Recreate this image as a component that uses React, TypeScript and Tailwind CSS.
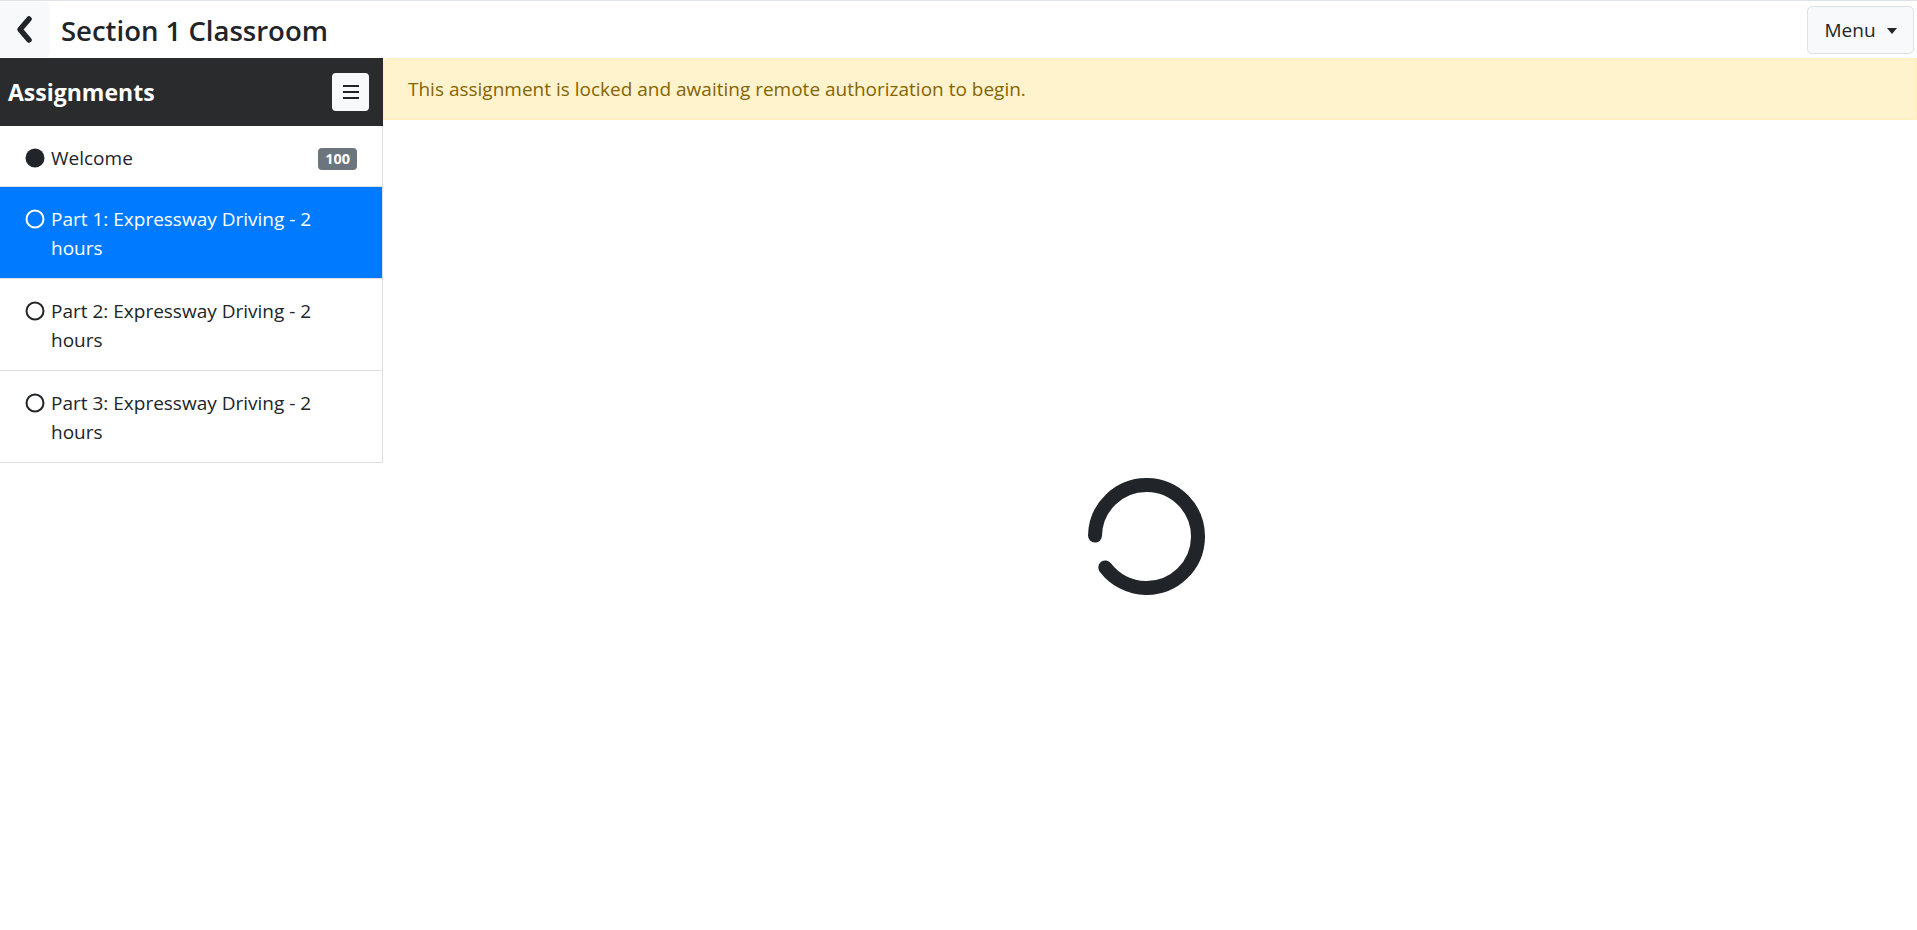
import { useState } from 'react';

const assignments = [
  { id: 'welcome', label: 'Welcome', done: true, score: 100 },
  { id: 'p1', label: 'Part 1: Expressway Driving - 2 hours', done: false },
  { id: 'p2', label: 'Part 2: Expressway Driving - 2 hours', done: false },
  { id: 'p3', label: 'Part 3: Expressway Driving - 2 hours', done: false },
];

function StatusDot({ done, active }: { done: boolean; active: boolean }) {
  const color = active ? '#ffffff' : '#212529';
  return (
    <svg width="20" height="20" viewBox="0 0 20 20" className="shrink-0 mt-[4px]">
      {done ? (
        <circle cx="10" cy="10" r="9.5" fill={color} />
      ) : (
        <circle cx="10" cy="10" r="8.5" fill="none" stroke={color} strokeWidth="2" />
      )}
    </svg>
  );
}

function Spinner() {
  return (
    <svg width="117" height="117" viewBox="0 0 117 117">
      <circle
        cx="58.5"
        cy="58.5"
        r="51.5"
        fill="none"
        stroke="#212529"
        strokeWidth="14"
        strokeLinecap="round"
        strokeDasharray="289 34.6"
        transform="rotate(181 58.5 58.5)"
      />
    </svg>
  );
}

export default function App() {
  const [activeId, setActiveId] = useState('p1');

  return (
    <div className="h-screen flex flex-col bg-white text-[#212529] font-['Open_Sans',sans-serif]">
      <header className="h-[58px] shrink-0 border-t border-[#dee2e6] flex items-center">
        <button
          type="button"
          className="h-[55px] w-[50px] bg-[#f8f9fa] rounded-r-[5px] flex items-center justify-center"
        >
          <svg width="20" height="30" viewBox="0 0 20 30">
            <polyline
              points="14,4 5,14.5 14,25"
              fill="none"
              stroke="#212529"
              strokeWidth="5.5"
              strokeLinecap="round"
              strokeLinejoin="round"
            />
          </svg>
        </button>
        <h1 className="ml-[11px] mt-[3px] text-[27.5px] font-semibold leading-none">Section 1 Classroom</h1>
        <button
          type="button"
          className="ml-auto mr-[3px] h-[48px] w-[107px] pt-[2px] bg-[#f8f9fa] border border-[#dee2e6] rounded-[5px] flex items-center justify-center gap-[11px] text-[19px]"
        >
          Menu
          <span className="w-0 h-0 border-l-[5px] border-r-[5px] border-t-[6px] border-l-transparent border-r-transparent border-t-[#212529]" />
        </button>
      </header>

      <div className="flex flex-1 min-h-0">
        <aside className="w-[383px] shrink-0 flex flex-col">
          <div className="h-[68px] bg-[#292b2c] flex items-center justify-between pl-[8px] pr-[14px]">
            <span className="text-white text-[23px] font-bold">Assignments</span>
            <button
              type="button"
              className="h-[38px] w-[37px] bg-[#f8f9fa] rounded-[4px] flex flex-col items-center justify-center gap-[3.5px]"
            >
              <span className="block w-[16px] h-[2.5px] bg-[#212529]" />
              <span className="block w-[16px] h-[2.5px] bg-[#212529]" />
              <span className="block w-[16px] h-[2.5px] bg-[#212529]" />
            </button>
          </div>
          <ul className="border-r border-[#dfdfdf]">
            {assignments.map((a) => {
              const active = a.id === activeId;
              return (
                <li
                  key={a.id}
                  onClick={() => setActiveId(a.id)}
                  className={`flex gap-[6px] pl-[25px] pr-[25px] pt-[18px] text-[19px] leading-[29px] border-b border-[#dfdfdf] cursor-pointer ${
                    a.score ? 'h-[61px]' : 'h-[92px]'
                  } ${active ? 'bg-[#007bff] text-white border-[#007bff]' : 'bg-white'}`}
                >
                  <StatusDot done={a.done} active={active} />
                  <span className="flex-1 pr-[40px]">{a.label}</span>
                  {a.score !== undefined && (
                    <span className="mt-[4px] h-[22px] px-[7px] rounded-[4px] bg-[#6c757d] text-white text-[14.5px] font-bold leading-[22px]">
                      {a.score}
                    </span>
                  )}
                </li>
              );
            })}
          </ul>
        </aside>

        <main className="flex-1 flex flex-col min-w-0">
          <div className="h-[62px] shrink-0 bg-[#fff3cd] border border-[#ffeeba] rounded-tl-[5px] flex items-center px-[24px] text-[19px] text-[#856404]">
            This assignment is locked and awaiting remote authorization to begin.
          </div>
          <div className="flex-1 flex items-center justify-center pt-[22px] pr-[8px]">
            <Spinner />
          </div>
        </main>
      </div>
    </div>
  );
}
